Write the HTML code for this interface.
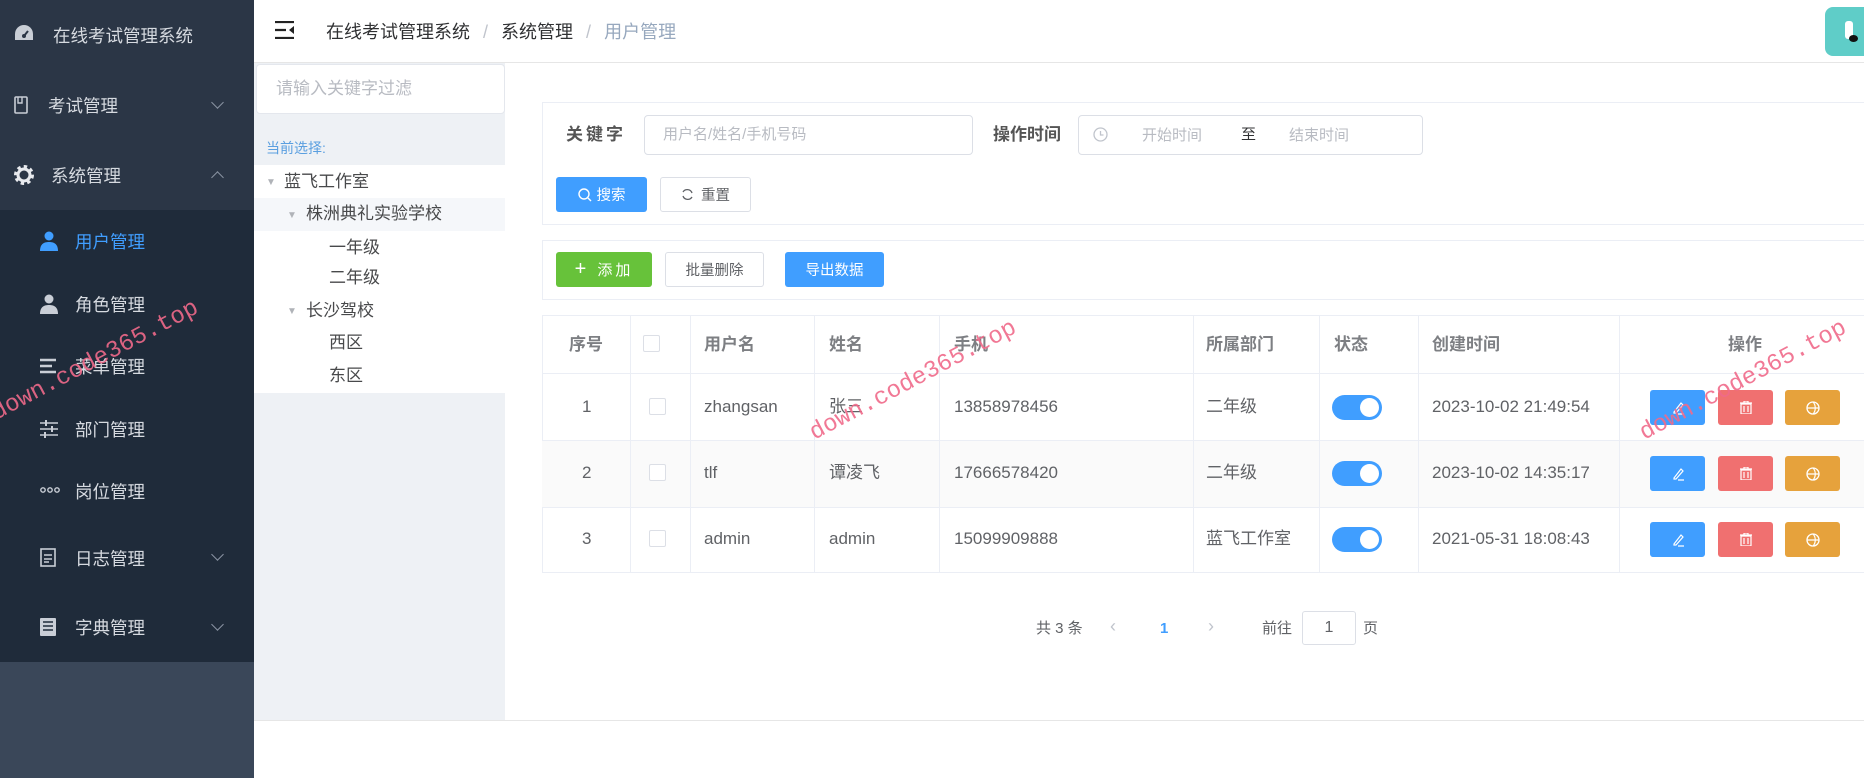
<!DOCTYPE html>
<html><head><meta charset="utf-8"><style>
*{box-sizing:border-box;margin:0;padding:0}
body{width:1864px;height:778px;overflow:hidden;background:#fff;font-family:"Liberation Sans","Noto Sans CJK SC",sans-serif;position:relative;color:#606266}
.abs{position:absolute}
#side{left:0;top:0;width:254px;height:778px;background:#3a4759}
#side .top{position:absolute;left:0;top:0;width:254px;height:210px;background:#2b3646}
#side .sub{position:absolute;left:0;top:210px;width:254px;height:452px;background:#1f2b3a}
.mi{position:absolute;color:#d6dae0;font-size:17.5px;white-space:nowrap;line-height:22px}
.arr{position:absolute;left:213px;width:9px;height:9px;border-right:1.5px solid #8a94a3;border-bottom:1.5px solid #8a94a3}
.hdr{left:254px;top:0;width:1610px;height:63px;border-bottom:1px solid #e6e6e6;background:#fff}
.tree{left:254px;top:63px;width:251px;height:657px;background:#eef1f5}
.tn{position:absolute;font-size:17px;color:#48494b;white-space:nowrap;line-height:20px}
.card{border:1px solid #ebeef5;background:#fff}
.inp{position:absolute;border:1px solid #dcdfe6;border-radius:4px;background:#fff;color:#b8bbc2;font-size:15px;line-height:20px}
.btn{position:absolute;border-radius:3px;font-size:14.5px;display:flex;align-items:center;justify-content:center;white-space:nowrap}
.th{position:absolute;font-size:17px;font-weight:bold;color:#7d7f83;line-height:20px}
.td{position:absolute;font-size:17px;color:#606266;white-space:nowrap;line-height:20px}
.cb{position:absolute;width:17px;height:17px;border:1px solid #dcdfe6;border-radius:2px;background:#fff}
.sw{position:absolute;width:50px;height:25px;border-radius:13px;background:#409eff}
.sw:after{content:"";position:absolute;right:3px;top:3px;width:19px;height:19px;border-radius:50%;background:#fff}
.ab{position:absolute;width:55px;height:35px;border-radius:3px;display:flex;align-items:center;justify-content:center}
.wm{position:absolute;color:#f06a8a;font-family:"Liberation Mono",monospace;font-size:24px;transform:rotate(-28deg);transform-origin:left bottom;white-space:nowrap;opacity:.9}
</style></head><body>
<div id="side" class="abs">
 <div class="top"></div><div class="sub"></div>
 <svg class="abs" style="left:14px;top:24px" width="20" height="18" viewBox="0 0 20 18"><path d="M10 1A9 9 0 0 0 1 10v6h18v-6A9 9 0 0 0 10 1z" fill="#c9ced6"/><circle cx="10" cy="12" r="2" fill="#2b3646"/><path d="M10 12l4-5" stroke="#2b3646" stroke-width="2"/></svg>
 <div class="mi" style="left:53px;top:25px">在线考试管理系统</div>
 <svg class="abs" style="left:14px;top:96px" width="14" height="18"><rect x="1" y="1" width="12" height="16" rx="1" fill="none" stroke="#c9ced6" stroke-width="1.6"/><path d="M4 1v6h4V1" fill="none" stroke="#c9ced6" stroke-width="1.4"/></svg>
 <div class="mi" style="left:48px;top:95px">考试管理</div><div class="arr" style="top:98px;transform:rotate(45deg)"></div>
 <svg class="abs" style="left:13px;top:164px" width="22" height="22" viewBox="0 0 22 22"><circle cx="11" cy="11" r="8" fill="none" stroke="#e8eaee" stroke-width="4" stroke-dasharray="3.2 3"/><circle cx="11" cy="11" r="6" fill="none" stroke="#e8eaee" stroke-width="3"/></svg>
 <div class="mi" style="left:51px;top:165px">系统管理</div><div class="arr" style="top:173px;transform:rotate(-135deg)"></div>
 <svg class="abs" style="left:40px;top:231px" width="18" height="20"><circle cx="9" cy="5" r="4.5" fill="#409eff"/><path d="M0 20c0-7 4-9 9-9s9 2 9 9z" fill="#409eff"/></svg>
 <div class="mi" style="left:75px;top:231px;color:#409eff">用户管理</div>
 <svg class="abs" style="left:40px;top:294px" width="18" height="20"><circle cx="9" cy="5" r="4.5" fill="#c9ced6"/><path d="M0 20c0-7 4-9 9-9s9 2 9 9z" fill="#c9ced6"/></svg>
 <div class="mi" style="left:75px;top:294px">角色管理</div>
 <svg class="abs" style="left:40px;top:358px" width="18" height="16"><path d="M0 2h16M0 8h12M0 14h16" stroke="#c9ced6" stroke-width="2.6"/></svg>
 <div class="mi" style="left:75px;top:356px">菜单管理</div>
 <svg class="abs" style="left:40px;top:420px" width="18" height="18"><path d="M0 3h18M0 9h18M0 15h18" stroke="#c9ced6" stroke-width="1.6"/><path d="M6 0v6M12 6v6M5 12v6" stroke="#c9ced6" stroke-width="2"/></svg>
 <div class="mi" style="left:75px;top:419px">部门管理</div>
 <svg class="abs" style="left:40px;top:487px" width="20" height="6"><circle cx="3" cy="3" r="2.2" fill="none" stroke="#c9ced6" stroke-width="1.4"/><circle cx="10" cy="3" r="2.2" fill="none" stroke="#c9ced6" stroke-width="1.4"/><circle cx="17" cy="3" r="2.2" fill="none" stroke="#c9ced6" stroke-width="1.4"/></svg>
 <div class="mi" style="left:75px;top:481px">岗位管理</div>
 <svg class="abs" style="left:40px;top:548px" width="16" height="19"><rect x="1" y="1" width="14" height="17" fill="none" stroke="#c9ced6" stroke-width="1.6"/><path d="M4 7h8M4 11h8M4 14h5" stroke="#c9ced6" stroke-width="1.4"/></svg>
 <div class="mi" style="left:75px;top:548px">日志管理</div><div class="arr" style="top:550px;transform:rotate(45deg)"></div>
 <svg class="abs" style="left:40px;top:618px" width="16" height="18"><rect x="0" y="0" width="16" height="18" rx="1" fill="#c9ced6"/><path d="M3 4h10M3 8h10M3 12h10" stroke="#1f2b3a" stroke-width="1.4"/></svg>
 <div class="mi" style="left:75px;top:617px">字典管理</div><div class="arr" style="top:620px;transform:rotate(45deg)"></div>
</div>

<div class="abs hdr">
 <svg class="abs" style="left:21px;top:21px" width="20" height="18"><path d="M0 1h19M0 9h11M0 17h19" stroke="#222" stroke-width="2.2"/><path d="M19 5l-5 4 5 4z" fill="#222"/></svg>
 <div class="abs" style="left:72px;top:21px;font-size:18px;line-height:22px;color:#303133;white-space:nowrap">在线考试管理系统 <span style="color:#c0c4cc;margin:0 8px">/</span> 系统管理 <span style="color:#c0c4cc;margin:0 8px">/</span> <span style="color:#97a8be">用户管理</span></div>
 <div class="abs" style="left:1571px;top:7px;width:50px;height:49px;border-radius:8px;background:#5fcdc8"><div class="abs" style="left:20px;top:14px;width:8px;height:18px;background:#fff;border-radius:3px"></div><div class="abs" style="left:24px;top:28px;width:9px;height:7px;background:#111;border-radius:50%"></div></div>
</div>

<div class="abs tree">
 <div class="abs" style="left:2px;top:1px;width:249px;height:50px;background:#fff;border:1px solid #e4e7ed;border-radius:4px"></div>
 <div class="abs" style="left:22px;top:16px;font-size:17px;line-height:20px;color:#b8bbc2">请输入关键字过滤</div>
 <div class="abs" style="left:12px;top:76px;font-size:14px;line-height:18px;color:#5a9fe0">当前选择:</div>
 <div class="abs" style="left:0;top:102px;width:251px;height:96px;background:#fff"></div>
 <div class="abs" style="left:0;top:135px;width:251px;height:33px;background:#f5f7fa"></div>
 <div class="abs" style="left:0;top:198px;width:251px;height:132px;background:#fff"></div>
 <div class="tn" style="left:12px;top:110px;font-size:10px;color:#b0b3b8">▼</div><div class="tn" style="left:30px;top:109px">蓝飞工作室</div>
 <div class="tn" style="left:33px;top:143px;font-size:10px;color:#b0b3b8">▼</div><div class="tn" style="left:52px;top:141px">株洲典礼实验学校</div>
 <div class="tn" style="left:75px;top:175px">一年级</div>
 <div class="tn" style="left:75px;top:205px">二年级</div>
 <div class="tn" style="left:33px;top:239px;font-size:10px;color:#b0b3b8">▼</div><div class="tn" style="left:52px;top:238px">长沙驾校</div>
 <div class="tn" style="left:75px;top:270px">西区</div>
 <div class="tn" style="left:75px;top:303px">东区</div>
</div>
<div class="abs" style="left:254px;top:720px;width:1610px;height:1px;background:#e6e6e6"></div>

<div class="abs card" style="left:542px;top:102px;width:1330px;height:123px"></div>
<div class="abs" style="left:566px;top:125px;font-size:17px;line-height:20px;font-weight:bold;color:#555;letter-spacing:3px">关键字</div>
<div class="inp" style="left:644px;top:115px;width:329px;height:40px;padding:9px 18px">用户名/姓名/手机号码</div>
<div class="abs" style="left:993px;top:125px;font-size:17px;line-height:20px;font-weight:bold;color:#555">操作时间</div>
<div class="inp" style="left:1078px;top:115px;width:345px;height:40px">
 <svg class="abs" style="left:14px;top:11px" width="15" height="15"><circle cx="7.5" cy="7.5" r="6.5" fill="none" stroke="#c0c4cc" stroke-width="1.3"/><path d="M7.5 4v4h3" fill="none" stroke="#c0c4cc" stroke-width="1.3"/></svg>
 <span class="abs" style="left:63px;top:10px">开始时间</span><span class="abs" style="left:162px;top:9px;color:#303133">至</span><span class="abs" style="left:210px;top:10px">结束时间</span>
</div>
<div class="btn" style="left:556px;top:177px;width:91px;height:35px;background:#409eff;color:#fff">
 <svg width="14" height="14" style="margin-right:5px"><circle cx="6" cy="6" r="5" fill="none" stroke="#fff" stroke-width="1.4"/><path d="M10 10l3 3" stroke="#fff" stroke-width="1.4"/></svg>搜索</div>
<div class="btn" style="left:660px;top:177px;width:91px;height:35px;border:1px solid #dcdfe6;color:#606266">
 <svg width="13" height="13" style="margin-right:7px"><path d="M11 5A5 5 0 0 0 2 4M2 8a5 5 0 0 0 9 1" fill="none" stroke="#606266" stroke-width="1.3"/></svg>重置</div>

<div class="abs card" style="left:542px;top:240px;width:1330px;height:60px"></div>
<div class="btn" style="left:556px;top:252px;width:96px;height:35px;background:#67c23a;color:#fff;font-size:15px;letter-spacing:3px"><span style="font-size:20px;margin-right:8px;font-weight:300">+</span>添加</div>
<div class="btn" style="left:665px;top:252px;width:99px;height:35px;border:1px solid #dcdfe6;color:#606266">批量删除</div>
<div class="btn" style="left:785px;top:252px;width:99px;height:35px;background:#409eff;color:#fff">导出数据</div>

<div class="abs" style="left:542px;top:315px;width:1330px;height:258px;border:1px solid #ebeef5"></div>
<div class="abs" style="left:542px;top:440px;width:1330px;height:67px;background:#fafafa"></div>
<div class="abs" style="left:542px;top:373px;width:1330px;height:1px;background:#ebeef5"></div>
<div class="abs" style="left:542px;top:440px;width:1330px;height:1px;background:#ebeef5"></div>
<div class="abs" style="left:542px;top:507px;width:1330px;height:1px;background:#ebeef5"></div>
<div class="abs" style="left:630px;top:315px;width:1px;height:258px;background:#ebeef5"></div>
<div class="abs" style="left:690px;top:315px;width:1px;height:258px;background:#ebeef5"></div>
<div class="abs" style="left:814px;top:315px;width:1px;height:258px;background:#ebeef5"></div>
<div class="abs" style="left:939px;top:315px;width:1px;height:258px;background:#ebeef5"></div>
<div class="abs" style="left:1193px;top:315px;width:1px;height:258px;background:#ebeef5"></div>
<div class="abs" style="left:1319px;top:315px;width:1px;height:258px;background:#ebeef5"></div>
<div class="abs" style="left:1418px;top:315px;width:1px;height:258px;background:#ebeef5"></div>
<div class="abs" style="left:1619px;top:315px;width:1px;height:258px;background:#ebeef5"></div>

<div class="th" style="left:569px;top:335px">序号</div><div class="cb" style="left:643px;top:335px"></div>
<div class="th" style="left:704px;top:335px">用户名</div><div class="th" style="left:829px;top:335px">姓名</div>
<div class="th" style="left:954px;top:335px">手机</div><div class="th" style="left:1206px;top:335px">所属部门</div>
<div class="th" style="left:1334px;top:335px">状态</div><div class="th" style="left:1432px;top:335px">创建时间</div>
<div class="th" style="left:1728px;top:335px">操作</div>

<div class="td" style="left:582px;top:397px">1</div><div class="cb" style="left:649px;top:398px"></div>
<div class="td" style="left:704px;top:397px">zhangsan</div><div class="td" style="left:829px;top:397px">张三</div>
<div class="td" style="left:954px;top:397px">13858978456</div><div class="td" style="left:1206px;top:397px">二年级</div>
<div class="sw" style="left:1332px;top:395px"></div><div class="td" style="left:1432px;top:397px">2023-10-02 21:49:54</div>

<div class="td" style="left:582px;top:463px">2</div><div class="cb" style="left:649px;top:464px"></div>
<div class="td" style="left:704px;top:463px">tlf</div><div class="td" style="left:829px;top:463px">谭凌飞</div>
<div class="td" style="left:954px;top:463px">17666578420</div><div class="td" style="left:1206px;top:463px">二年级</div>
<div class="sw" style="left:1332px;top:461px"></div><div class="td" style="left:1432px;top:463px">2023-10-02 14:35:17</div>

<div class="td" style="left:582px;top:529px">3</div><div class="cb" style="left:649px;top:530px"></div>
<div class="td" style="left:704px;top:529px">admin</div><div class="td" style="left:829px;top:529px">admin</div>
<div class="td" style="left:954px;top:529px">15099909888</div><div class="td" style="left:1206px;top:529px">蓝飞工作室</div>
<div class="sw" style="left:1332px;top:527px"></div><div class="td" style="left:1432px;top:529px">2021-05-31 18:08:43</div>

<div class="ab" style="left:1650px;top:390px;background:#409eff"><svg width="14" height="14"><path d="M3 11L10 2l2 2-7 8H3zM7 13h6" fill="none" stroke="#fff" stroke-width="1.2"/></svg></div>
<div class="ab" style="left:1718px;top:390px;background:#f07070"><svg width="12" height="13"><path d="M0 2h12M4 2V0h4v2M1 3h10v10H1zM4 5v6M8 5v6" fill="none" stroke="#fff" stroke-width="1.2"/></svg></div>
<div class="ab" style="left:1785px;top:390px;background:#e6a23c"><svg width="14" height="14"><circle cx="7" cy="7" r="6" fill="none" stroke="#fff" stroke-width="1.3"/><path d="M1 7h12M7 1c3 3 3 9 0 12" fill="none" stroke="#fff" stroke-width="1.2"/></svg></div>
<div class="ab" style="left:1650px;top:456px;background:#409eff"><svg width="14" height="14"><path d="M3 11L10 2l2 2-7 8H3zM7 13h6" fill="none" stroke="#fff" stroke-width="1.2"/></svg></div>
<div class="ab" style="left:1718px;top:456px;background:#f07070"><svg width="12" height="13"><path d="M0 2h12M4 2V0h4v2M1 3h10v10H1zM4 5v6M8 5v6" fill="none" stroke="#fff" stroke-width="1.2"/></svg></div>
<div class="ab" style="left:1785px;top:456px;background:#e6a23c"><svg width="14" height="14"><circle cx="7" cy="7" r="6" fill="none" stroke="#fff" stroke-width="1.3"/><path d="M1 7h12M7 1c3 3 3 9 0 12" fill="none" stroke="#fff" stroke-width="1.2"/></svg></div>
<div class="ab" style="left:1650px;top:522px;background:#409eff"><svg width="14" height="14"><path d="M3 11L10 2l2 2-7 8H3zM7 13h6" fill="none" stroke="#fff" stroke-width="1.2"/></svg></div>
<div class="ab" style="left:1718px;top:522px;background:#f07070"><svg width="12" height="13"><path d="M0 2h12M4 2V0h4v2M1 3h10v10H1zM4 5v6M8 5v6" fill="none" stroke="#fff" stroke-width="1.2"/></svg></div>
<div class="ab" style="left:1785px;top:522px;background:#e6a23c"><svg width="14" height="14"><circle cx="7" cy="7" r="6" fill="none" stroke="#fff" stroke-width="1.3"/><path d="M1 7h12M7 1c3 3 3 9 0 12" fill="none" stroke="#fff" stroke-width="1.2"/></svg></div>

<div class="abs" style="left:1036px;top:619px;font-size:15px;line-height:20px;color:#606266">共 3 条</div>
<div class="abs" style="left:1110px;top:616px;font-size:18px;color:#c0c4cc">‹</div>
<div class="abs" style="left:1160px;top:619px;font-size:15px;line-height:20px;color:#409eff;font-weight:bold">1</div>
<div class="abs" style="left:1208px;top:616px;font-size:18px;color:#c0c4cc">›</div>
<div class="abs" style="left:1262px;top:619px;font-size:15px;line-height:20px;color:#606266">前往</div>
<div class="abs" style="left:1302px;top:611px;width:54px;height:34px;border:1px solid #dcdfe6;border-radius:3px;text-align:center;line-height:32px;font-size:16px;color:#606266">1</div>
<div class="abs" style="left:1363px;top:619px;font-size:15px;line-height:20px;color:#606266">页</div>

<div class="wm" style="left:0px;top:400px">down.code365.top</div>
<div class="wm" style="left:818px;top:420px">down.code365.top</div>
<div class="wm" style="left:1648px;top:420px">down.code365.top</div>
</body></html>
